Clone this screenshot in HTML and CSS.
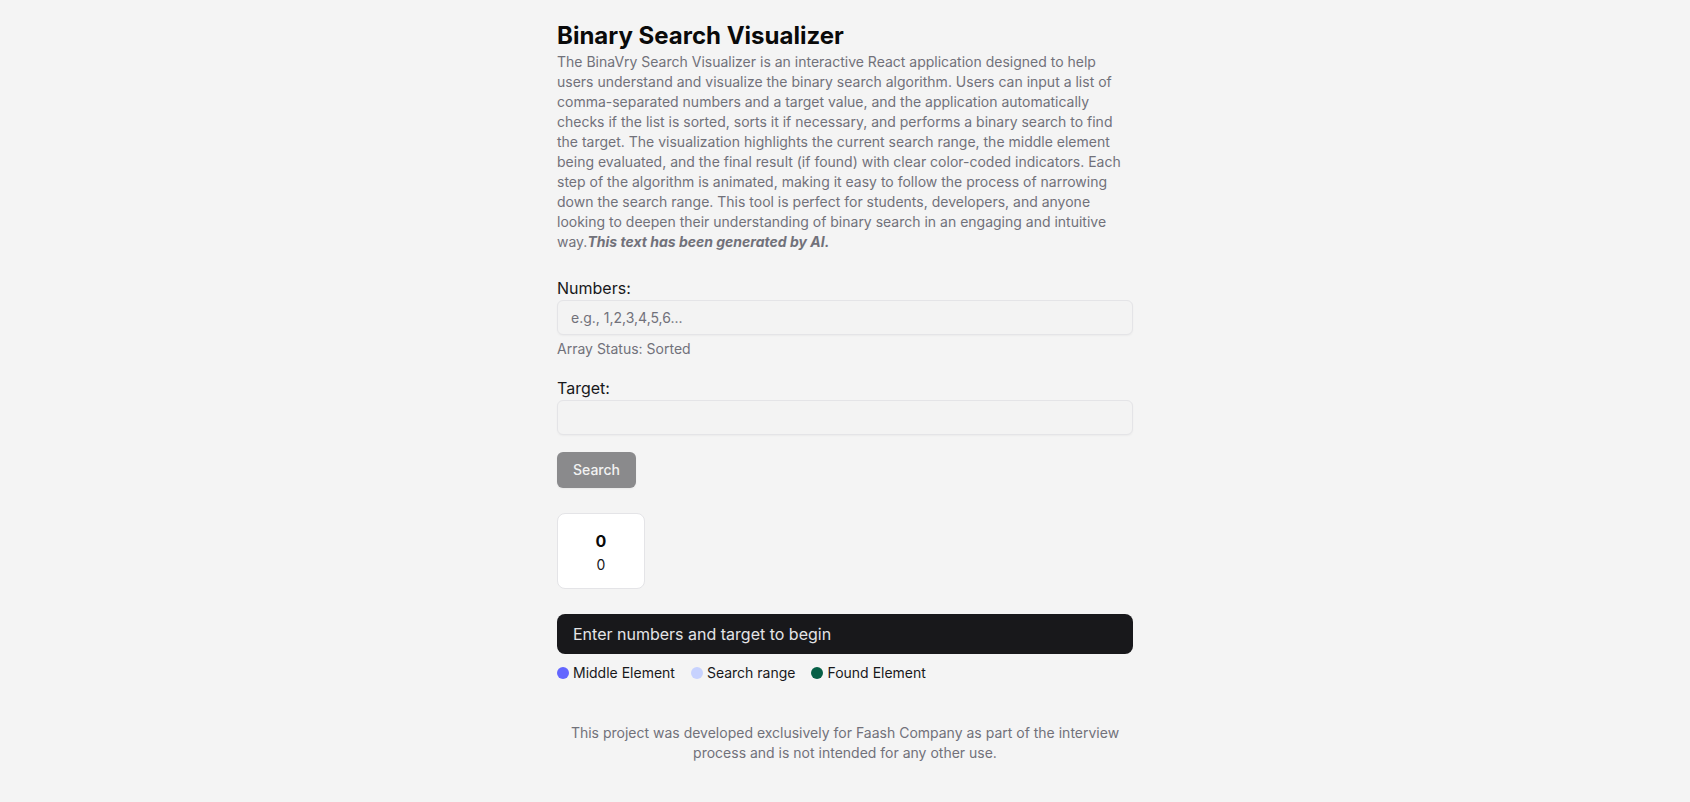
FILE: index.html
```html
<!DOCTYPE html>
<html lang="en">
<head>
<meta charset="utf-8">
<title>Binary Search Visualizer</title>
<link rel="stylesheet" href="styles.css">
</head>
<body>
<main class="container">
  <h1 class="title">Binary Search Visualizer</h1>
  <p class="intro">The BinaVry Search Visualizer is an interactive React application designed to help users understand and visualize the binary search algorithm. Users can input a list of comma-separated numbers and a target value, and the application automatically checks if the list is sorted, sorts it if necessary, and performs a binary search to find the target. The visualization highlights the current search range, the middle element being evaluated, and the final result (if found) with clear color-coded indicators. Each step of the algorithm is animated, making it easy to follow the process of narrowing down the search range. This tool is perfect for students, developers, and anyone looking to deepen their understanding of binary search in an engaging and intuitive way.<strong class="ai-note">This text has been generated by AI.</strong></p>

  <div class="field field-numbers">
    <label class="label" for="numbers">Numbers:</label>
    <input class="input" id="numbers" type="text" placeholder="e.g., 1,2,3,4,5,6...">
    <div class="status">Array Status: Sorted</div>
  </div>

  <div class="field field-target">
    <label class="label" for="target">Target:</label>
    <input class="input" id="target" type="text">
  </div>

  <button class="btn" type="button">Search</button>

  <div class="cells">
    <div class="cell">
      <div class="cell-value">0</div>
      <div class="cell-index">0</div>
    </div>
  </div>

  <div class="message">Enter numbers and target to begin</div>

  <div class="legend">
    <div class="legend-item"><span class="dot dot-middle"></span>Middle Element</div>
    <div class="legend-item"><span class="dot dot-range"></span>Search range</div>
    <div class="legend-item"><span class="dot dot-found"></span>Found Element</div>
  </div>

  <footer class="footer">This project was developed exclusively for Faash Company as part of the interview process and is not intended for any other use.</footer>
</main>
</body>
</html>
```

FILE: styles.css
```css
* { box-sizing: border-box; }

html, body {
  margin: 0;
  padding: 0;
  background: #f4f4f4;
}

body {
  font-family: Inter, "Noto Sans", "Liberation Sans", sans-serif;
  color: #18181b;
}

.container {
  width: 576px;
  margin: 0 auto;
  padding-top: 20px;
  padding-bottom: 40px;
}

.title {
  margin: 0;
  font-size: 24px;
  line-height: 32px;
  font-weight: 700;
  color: #0a0a0a;
}

.intro {
  margin: 0;
  font-size: 14px;
  line-height: 20px;
  color: #71717a;
}

.ai-note {
  font-style: italic;
  font-weight: 700;
}

.field-numbers { margin-top: 24px; }
.field-target { margin-top: 17px; }

.label {
  display: block;
  font-size: 16px;
  line-height: 24px;
  color: #18181b;
}

.input {
  display: block;
  width: 100%;
  height: 35px;
  padding: 0 13px;
  border: 1px solid #e4e4e7;
  border-radius: 6px;
  background: #f3f3f3;
  box-shadow: 0 1px 2px rgba(0, 0, 0, 0.04);
  font-family: inherit;
  font-size: 14px;
  color: #18181b;
  outline: none;
}

.input::placeholder { color: #71717a; }

.status {
  margin-top: 4px;
  font-size: 14px;
  line-height: 20px;
  color: #71717a;
}

.btn {
  display: block;
  margin-top: 17px;
  height: 36px;
  padding: 0 16px;
  border: none;
  border-radius: 6px;
  background: #8a8a8c;
  color: #f2f2f2;
  font-family: inherit;
  font-size: 14px;
  line-height: 20px;
  font-weight: 500;
  box-shadow: 0 1px 2px rgba(0, 0, 0, 0.05);
}

.cells {
  display: flex;
  gap: 8px;
  margin-top: 25px;
}

.cell {
  width: 88px;
  padding: 15px 0 13px;
  border: 1px solid #e4e4e7;
  border-radius: 8px;
  background: #ffffff;
  text-align: center;
}

.cell-value {
  font-size: 16px;
  line-height: 24px;
  font-weight: 700;
  color: #0a0a0a;
}

.cell-index {
  margin-top: 2px;
  font-size: 14px;
  line-height: 20px;
  color: #18181b;
}

.message {
  margin-top: 25px;
  height: 40px;
  padding: 8px 16px;
  border-radius: 8px;
  background: #18181b;
  color: #e4e4e7;
  font-size: 16px;
  line-height: 24px;
}

.legend {
  display: flex;
  gap: 16px;
  margin-top: 9px;
  font-size: 14px;
  line-height: 20px;
  color: #18181b;
}

.legend-item {
  display: flex;
  align-items: center;
  gap: 4px;
}

.dot {
  width: 12px;
  height: 12px;
  border-radius: 50%;
  flex: none;
}

.dot-middle { background: #6366ff; }
.dot-range { background: #c7d2fe; }
.dot-found { background: #065f46; }

.footer {
  margin-top: 40px;
  text-align: center;
  font-size: 14px;
  line-height: 20px;
  color: #71717a;
}
```
